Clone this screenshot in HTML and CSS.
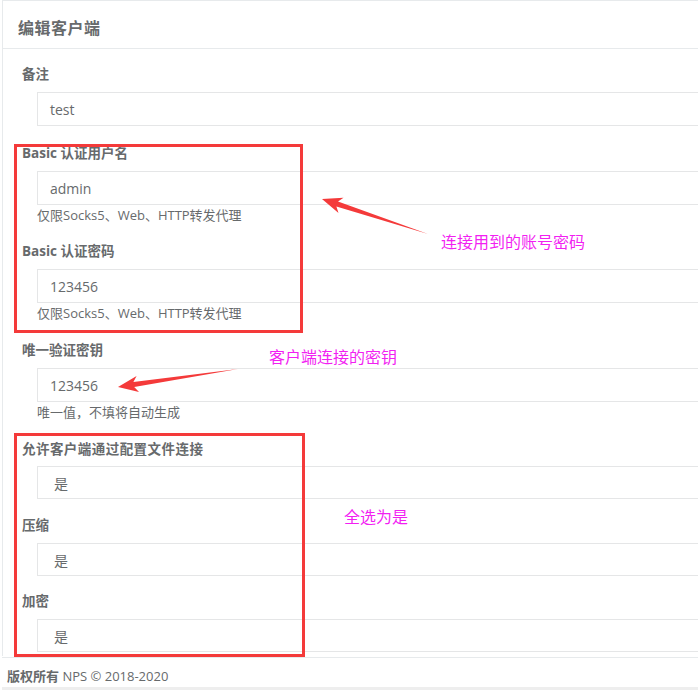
FILE: index.html
```html
<!DOCTYPE html>
<html lang="zh">
<head>
<meta charset="utf-8">
<title>编辑客户端</title>
<link rel="stylesheet" href="styles.css">
</head>
<body>
<div class="page">
  <div class="card">
    <div class="card-title"><h5>编辑客户端</h5></div>
    <div class="card-content">
      <div class="group">
        <label class="lbl">备注</label>
        <div class="field"><div class="input">test</div></div>
      </div>
      <div class="group">
        <label class="lbl">Basic 认证用户名</label>
        <div class="field"><div class="input">admin</div><div class="help">仅限Socks5、Web、HTTP转发代理</div></div>
      </div>
      <div class="group g-wide">
        <label class="lbl">Basic 认证密码</label>
        <div class="field"><div class="input">123456</div><div class="help">仅限Socks5、Web、HTTP转发代理</div></div>
      </div>
      <div class="group g-wide">
        <label class="lbl">唯一验证密钥</label>
        <div class="field"><div class="input">123456</div><div class="help">唯一值，不填将自动生成</div></div>
      </div>
      <div class="group g-sel1">
        <label class="lbl wide">允许客户端通过配置文件连接</label>
        <div class="field"><div class="select">是</div></div>
      </div>
      <div class="group g-sel2">
        <label class="lbl">压缩</label>
        <div class="field"><div class="select">是</div></div>
      </div>
      <div class="group g-last">
        <label class="lbl">加密</label>
        <div class="field"><div class="select">是</div></div>
      </div>
    </div>
  </div>
  <div class="footer"><strong>版权所有</strong> NPS © 2018-2020</div>
</div>

<div class="box box-auth"></div>
<div class="box box-opts"></div>
<div class="note note-1">连接用到的账号密码</div>
<div class="note note-2">客户端连接的密钥</div>
<div class="note note-3">全选为是</div>
<svg class="arrows" width="698" height="691" viewBox="0 0 698 691">
  <polygon fill="#f43a3a" points="322,199 343.5,197.7 338,201.6 428,234 336.4,206.4 338.5,212.9"/>
  <polygon fill="#f43a3a" points="118,387 136.6,376.1 133.4,382.1 238,369 134.2,387.1 139,391.9"/>
</svg>
</body>
</html>
```
FILE: styles.css
```css
html, body {
  margin: 0;
  padding: 0;
  background: #ffffff;
  overflow: hidden;
}
body {
  width: 698px;
  height: 691px;
  position: relative;
  font-family: "Open Sans", "Noto Sans CJK SC", sans-serif;
  color: #676a6c;
}
.page {
  padding-left: 2px;
}
.card {
  border-top: 1px solid #e7eaec;
  border-left: 1px solid #e7eaec;
  background: #fff;
}
.card-title {
  height: 47px;
  border-bottom: 1px solid #e7eaec;
  padding: 0 15px;
  display: flex;
  align-items: center;
}
.card-title h5 {
  margin: 0;
  font-size: 16px;
  font-weight: 700;
  color: #676a6c;
  font-family: "Noto Sans CJK SC", sans-serif;
  line-height: 20px;
  padding-top: 4px;
  letter-spacing: 0.5px;
}
.card-content {
  padding: 15px 0 4px 19px;
}
.group {
  display: flex;
  flex-direction: column;
  margin-bottom: 17px;
}
.group.g-wide { margin-bottom: 18px; }
.group.g-sel1 { margin-bottom: 16px; }
.group.g-sel2 { margin-bottom: 15px; }
.group.g-last { margin-bottom: 0; }
.lbl {
  font-size: 13.5px;
  font-weight: 700;
  line-height: 20px;
  margin-bottom: 8px;
  font-family: "Open Sans", "Noto Sans CJK SC", sans-serif;
}
.g-sel1 .lbl { margin-bottom: 7px; }
.lbl.wide { letter-spacing: 0.45px; }
.field {
  padding-left: 15px;
}
.input, .select {
  border: 1px solid #e5e6e7;
  border-right: none;
  height: 32px;
  box-sizing: content-box;
  display: flex;
  align-items: center;
  padding-left: 12px;
  font-size: 14px;
  color: #676a6c;
}
.select {
  padding-left: 16px;
  padding-top: 1px;
  height: 30px;
}
.help {
  font-size: 13px;
  line-height: 18px;
  margin-top: 1px;
}
.footer {
  border-top: 1px solid #e7eaec;
  margin-top: 1px;
  padding: 8px 5px 0;
  height: 21px;
  font-size: 13px;
  line-height: 20px;
  border-bottom: 3px solid #eeeeee;
}
.footer strong { font-weight: 700; }

.box {
  position: absolute;
  border: 3px solid #f43a3a;
  box-sizing: border-box;
}
.box-auth { left: 14px; top: 144px; width: 289px; height: 189px; }
.box-opts { left: 14px; top: 433px; width: 291px; height: 224px; }
.note {
  position: absolute;
  color: #f21ff2;
  font-size: 16px;
  line-height: 20px;
  font-family: "Noto Sans CJK SC", sans-serif;
  white-space: nowrap;
}
.note-1 { left: 441px; top: 231px; }
.note-2 { left: 269px; top: 346px; }
.note-3 { left: 344px; top: 506px; }
.arrows {
  position: absolute;
  left: 0;
  top: 0;
  pointer-events: none;
}
```
